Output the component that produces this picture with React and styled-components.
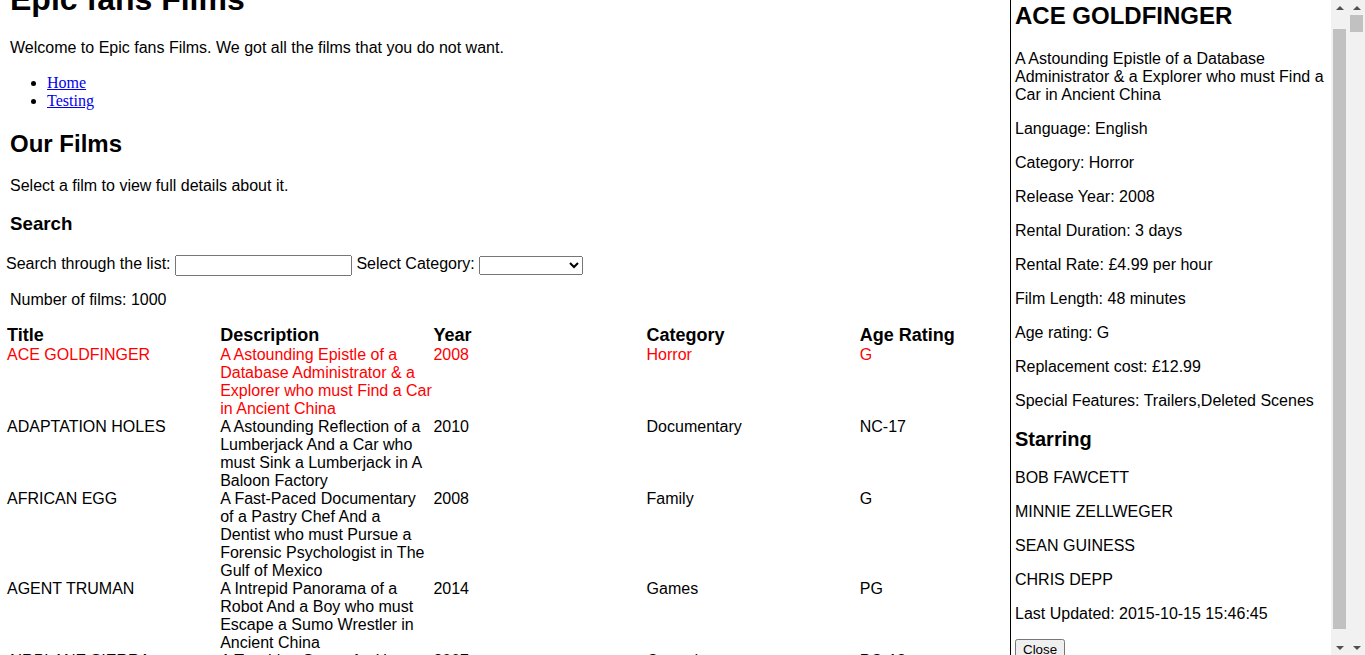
import React, { useLayoutEffect, useRef } from 'react'
import styled, { createGlobalStyle } from 'styled-components'

const GlobalStyle = createGlobalStyle`
  html, body {
    margin: 0;
    background: #fff;
    color: #000;
    font-family: "Liberation Sans", Arial, sans-serif;
    font-size: 16px;
  }
`

const Main = styled.div`
  padding: 0 7px;
`

const Title = styled.h1`
  font-size: 32px;
  margin: 21px 0 21px 3px;
`

const Para = styled.p`
  margin: ${p => p.$top || 16}px 0 16px 3px;
`

const NavList = styled.ul`
  margin: 17px 0 16px;
  padding-left: 40px;
  font-family: "Liberation Serif", "Times New Roman", serif;

  a {
    color: #0000ee;
  }
`

const SubTitle = styled.h2`
  font-size: 24px;
  margin: 20px 0 19px 3px;
`

const SmallTitle = styled.h3`
  font-size: 18.72px;
  margin: 17.72px 0 19.72px 3px;
`

const SearchRow = styled.div`
  margin-left: -1px;
  line-height: 20px;
`

const TextInput = styled.input`
  box-sizing: border-box;
  width: 177px;
  height: 21px;
  vertical-align: middle;
  font-size: 13.33px;
`

const CategorySelect = styled.select`
  box-sizing: border-box;
  width: 104px;
  height: 19px;
  vertical-align: middle;
  font-size: 13.33px;
`

const FilmTable = styled.table`
  border-spacing: 0;
  table-layout: fixed;
  width: 1066px;

  th {
    font-size: 18px;
    text-align: left;
    padding: 0;
  }
`

const Cell = styled.td`
  padding: 0;
  vertical-align: top;
  color: ${p => (p.$active ? '#ff0000' : '#000')};
`

const Panel = styled.aside`
  position: fixed;
  top: 0;
  right: 17px;
  box-sizing: border-box;
  width: 338px;
  height: 100vh;
  display: flex;
  background: #fff;
  border-left: 1px solid #000;
`

const PanelBody = styled.div`
  flex: 1;
  min-width: 0;
  overflow-y: scroll;
  scrollbar-width: none;
  padding: 0 4px;

  h2 {
    font-size: 24px;
    margin: 20px 0;
  }

  h3 {
    font-size: 20px;
    margin: 18px 0;
  }

  p {
    margin: 16px 0;
  }
`

const CloseButton = styled.button`
  font-family: "Liberation Sans", Arial, sans-serif;
  font-size: 13.33px;
  padding: 1px 6px;
  margin-bottom: 4px;
`

const ScrollColumn = styled.div`
  width: 17px;
  flex: none;
  display: flex;
  flex-direction: column;
  background: #f1f1f1;
`

const PageBar = styled(ScrollColumn)`
  position: fixed;
  top: 0;
  right: 0;
  height: 100vh;
`

const ArrowButton = styled.div`
  height: 15px;
  display: flex;
  align-items: center;
  justify-content: center;
`

const Track = styled.div`
  flex: 1;
  position: relative;
`

const Thumb = styled.div`
  position: absolute;
  left: 2px;
  right: 2px;
  background: #c1c1c1;
`

const Arrow = ({ down }) => (
  <svg width="8" height="4" viewBox="0 0 8 4">
    <polygon points={down ? '0,0 8,0 4,4' : '0,4 8,4 4,0'} fill="#505050" />
  </svg>
)

const ScrollBar = ({ thumbTop, thumbHeight }) => (
  <ScrollColumn>
    <ArrowButton><Arrow /></ArrowButton>
    <Track>
      <Thumb style={{ top: thumbTop, height: thumbHeight }} />
    </Track>
    <ArrowButton><Arrow down /></ArrowButton>
  </ScrollColumn>
)

const films = [
  ['ACE GOLDFINGER', 'A Astounding Epistle of a Database Administrator & a Explorer who must Find a Car in Ancient China', '2008', 'Horror', 'G'],
  ['ADAPTATION HOLES', 'A Astounding Reflection of a Lumberjack And a Car who must Sink a Lumberjack in A Baloon Factory', '2010', 'Documentary', 'NC-17'],
  ['AFRICAN EGG', 'A Fast-Paced Documentary of a Pastry Chef And a Dentist who must Pursue a Forensic Psychologist in The Gulf of Mexico', '2008', 'Family', 'G'],
  ['AGENT TRUMAN', 'A Intrepid Panorama of a Robot And a Boy who must Escape a Sumo Wrestler in Ancient China', '2014', 'Games', 'PG'],
  ['AIRPLANE SIERRA', 'A Touching Saga of a Hunter And a Butler who must Discover a Butler in A Jet Boat', '2007', 'Comedy', 'PG-13'],
  ['AIRPORT POLLOCK', 'A Epic Tale of a Moose And a Girl who must Confront a Monkey in Ancient India', '2012', 'Horror', 'R'],
  ['ALABAMA DEVIL', 'A Thoughtful Panorama of a Database Administrator And a Mad Scientist who must Outgun a Mad Scientist in A Jet Boat', '2006', 'Horror', 'PG-13'],
  ['ALADDIN CALENDAR', 'A Action-Packed Tale of a Man And a Lumberjack who must Reach a Feminist in Ancient China', '2009', 'Sports', 'NC-17'],
]

const details = [
  'Language: English',
  'Category: Horror',
  'Release Year: 2008',
  'Rental Duration: 3 days',
  'Rental Rate: £4.99 per hour',
  'Film Length: 48 minutes',
  'Age rating: G',
  'Replacement cost: £12.99',
  'Special Features: Trailers,Deleted Scenes',
]

const actors = ['BOB FAWCETT', 'MINNIE ZELLWEGER', 'SEAN GUINESS', 'CHRIS DEPP']

export default function App() {
  const panelRef = useRef(null)

  useLayoutEffect(() => {
    window.scrollTo(0, 40)
    if (panelRef.current) panelRef.current.scrollTop = 18
  }, [])

  return (
    <>
      <GlobalStyle />
      <Main>
        <Title>Epic fans Films</Title>
        <Para>Welcome to Epic fans Films. We got all the films that you do not want.</Para>
        <NavList>
          <li><a href="#">Home</a></li>
          <li><a href="#">Testing</a></li>
        </NavList>
        <SubTitle>Our Films</SubTitle>
        <Para>Select a film to view full details about it.</Para>
        <SmallTitle>Search</SmallTitle>
        <SearchRow>
          Search through the list: <TextInput type="text" /> Select Category: <CategorySelect />
        </SearchRow>
        <Para $top={15}>Number of films: 1000</Para>
        <FilmTable>
          <thead>
            <tr>
              <th>Title</th>
              <th>Description</th>
              <th>Year</th>
              <th>Category</th>
              <th>Age Rating</th>
            </tr>
          </thead>
          <tbody>
            {films.map((f, i) => (
              <tr key={f[0]}>
                {f.map((v, j) => (
                  <Cell key={j} $active={i === 0}>{v}</Cell>
                ))}
              </tr>
            ))}
          </tbody>
        </FilmTable>
      </Main>
      <Panel>
        <PanelBody ref={panelRef}>
          <h2>ACE GOLDFINGER</h2>
          <p>A Astounding Epistle of a Database Administrator &amp; a Explorer who must Find a Car in Ancient China</p>
          {details.map(d => <p key={d}>{d}</p>)}
          <h3>Starring</h3>
          {actors.map(a => <p key={a}>{a}</p>)}
          <p>Last Updated: 2015-10-15 15:46:45</p>
          <CloseButton>Close</CloseButton>
        </PanelBody>
        <ScrollBar thumbTop={14} thumbHeight={600} />
      </Panel>
      <PageBar>
        <ArrowButton><Arrow /></ArrowButton>
        <Track>
          <Thumb style={{ top: 0, height: 17 }} />
        </Track>
        <ArrowButton><Arrow down /></ArrowButton>
      </PageBar>
    </>
  )
}
